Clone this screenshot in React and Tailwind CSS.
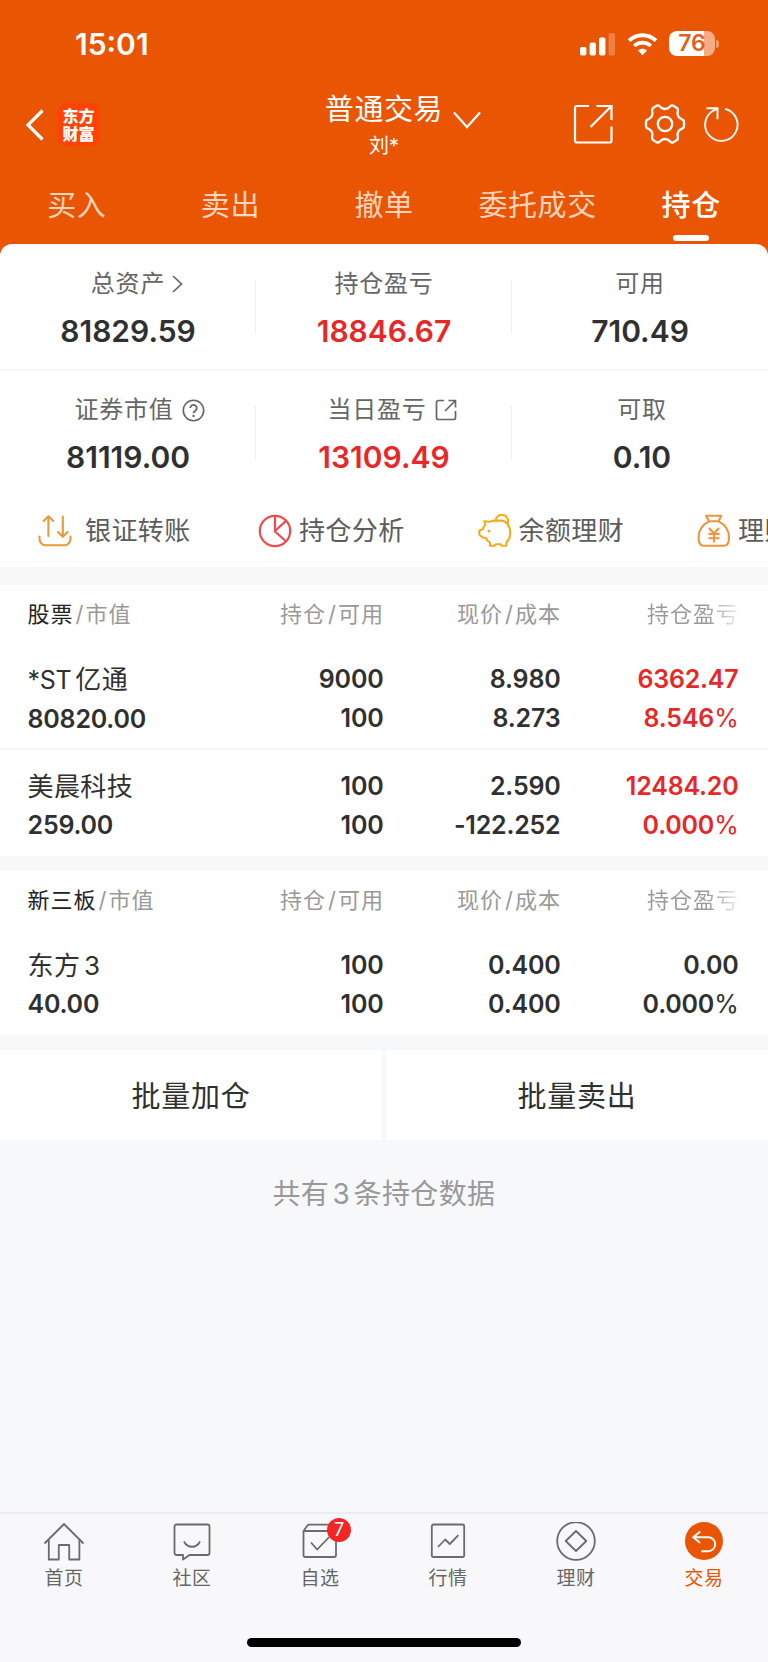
import React, { useState } from "react";
import clsx from "clsx";

const tabs = ["买入", "卖出", "撤单", "委托成交", "持仓"];

const stockRows = [
  {
    prefix: "*ST",
    name: "亿通",
    value: "80820.00",
    amount: "9000",
    usable: "100",
    price: "8.980",
    cost: "8.273",
    profit: "6362.47",
    rate: "8.546",
    up: true,
  },
  {
    name: "美晨科技",
    value: "259.00",
    amount: "100",
    usable: "100",
    price: "2.590",
    cost: "-122.252",
    profit: "12484.20",
    rate: "0.000",
    up: true,
  },
];

const neeqRows = [
  {
    name: "东方 3",
    value: "40.00",
    amount: "100",
    usable: "100",
    price: "0.400",
    cost: "0.400",
    profit: "0.00",
    rate: "0.000",
    up: false,
  },
];

/* ---------- icons ---------- */

function SignalIcon() {
  return (
    <svg width="36" height="24" viewBox="0 0 36 24" fill="#fff">
      <rect x="0" y="15" width="6.4" height="8.6" rx="1.8" />
      <rect x="9.6" y="10.6" width="6.4" height="13" rx="1.8" />
      <rect x="19" y="5.6" width="6.4" height="18" rx="1.8" />
      <rect x="28.6" y="1" width="6.4" height="22.6" rx="1.8" opacity="0.25" />
    </svg>
  );
}

function WifiIcon() {
  return (
    <svg width="31" height="24" viewBox="0 0 31 24" fill="none" stroke="#fff">
      <path d="M2 8.6C9.6 1.3 21.4 1.3 29 8.6" strokeWidth="4" />
      <path d="M7.2 14C11.8 9.6 19.2 9.6 23.8 14" strokeWidth="3.8" />
      <path
        d="M11 18.4c2.6-2.2 6.4-2.2 9 0l-4.5 4.8z"
        fill="#fff"
        stroke="none"
      />
    </svg>
  );
}

function Battery() {
  return (
    <div className="flex items-center gap-px">
      <div className="flex h-[25px] w-[46px] items-center justify-center rounded-[8px] bg-[linear-gradient(to_right,#fff_76%,#f6ab83_76%)] text-[23px] leading-none font-semibold text-[#e0601c]">
        76
      </div>
      <div className="h-2 w-[3px] rounded-r-full bg-[#f39a6b]" />
    </div>
  );
}

function BackIcon() {
  return (
    <svg width="18" height="32" viewBox="0 0 18 32" fill="none">
      <path d="M16.5 1.5L2 16l14.5 14.5" stroke="#fff" strokeWidth="3.2" />
    </svg>
  );
}

function ExportIcon() {
  return (
    <svg
      width="40"
      height="40"
      viewBox="0 0 40 40"
      fill="none"
      stroke="#fff"
      strokeWidth="2.2"
    >
      <path d="M16 2H4a2 2 0 0 0-2 2v32.5a2 2 0 0 0 2 2h32.5a2 2 0 0 0 2-2V22.5" />
      <path d="M23.5 2h15v14M38 2.5L17.5 23" />
    </svg>
  );
}

function GearIcon() {
  return (
    <svg
      width="42"
      height="42"
      viewBox="0 0 42 42"
      fill="none"
      stroke="#fff"
      strokeWidth="2.3"
      strokeLinejoin="round"
    >
      <path d="M13 2.6Q15 2 16.2 3.8Q18 6 21 6Q24 6 25.8 3.8Q27 2 29 2.6L32.6 4.7Q34.4 6 33.8 8.2Q33 11 34.3 13.4Q35.8 15.6 38 16.4Q40 17 40 19V23Q40 25 38 25.6Q35.8 26.4 34.3 28.6Q33 31 33.8 33.8Q34.4 36 32.6 37.3L29 39.4Q27 40 25.8 38.2Q24 36 21 36Q18 36 16.2 38.2Q15 40 13 39.4L9.4 37.3Q7.6 36 8.2 33.8Q9 31 7.7 28.6Q6.2 26.4 4 25.6Q2 25 2 23V19Q2 17 4 16.4Q6.2 15.6 7.7 13.4Q9 11 8.2 8.2Q7.6 6 9.4 4.7Z" />
      <circle cx="21" cy="21" r="7.2" />
    </svg>
  );
}

function RefreshIcon() {
  return (
    <svg
      width="37"
      height="37"
      viewBox="0 0 37 37"
      fill="none"
      stroke="#fff"
      strokeWidth="1.9"
    >
      <path d="M22 2.9A16.2 16.2 0 1 1 10 4.800L14 2.600" />
      <path d="M3.5 2.3h11v11" />
    </svg>
  );
}

function TransferIcon() {
  return (
    <svg
      width="34"
      height="34"
      viewBox="0 0 34 34"
      fill="none"
      stroke="#e99a3a"
      strokeWidth="2.1"
      strokeLinecap="round"
      strokeLinejoin="round"
    >
      <path d="M10.4 22V2.5M5.6 7l4.8-4.8L15.2 7" />
      <path d="M24.8 2.5V22M20 18l4.8 4.8 4.8-4.8" />
      <path d="M1.5 22.5v2.3a6.5 6.5 0 0 0 6.5 6.5h18a6.5 6.5 0 0 0 6.5-6.5v-2.3" />
    </svg>
  );
}

function PieIcon() {
  return (
    <svg
      width="34"
      height="34"
      viewBox="0 0 34 34"
      fill="none"
      stroke="#f04a4e"
      strokeWidth="2.2"
    >
      <circle cx="17" cy="17" r="15.2" />
      <path d="M17 2v15.5l11.5 10.2M17 17L28.2 6.6" />
    </svg>
  );
}

function PiggyIcon() {
  return (
    <svg
      width="34"
      height="34"
      viewBox="0 0 34 34"
      fill="none"
      stroke="#f2ab1c"
      strokeWidth="2.1"
      strokeLinejoin="round"
    >
      <path d="M6.3 7.2L11.8 7.8Q13.5 6.8 16 6.6H24Q32.2 9 32.2 19Q32.2 25 28.5 28.2V31.8H23.8L22.8 30.2H17.6L16.6 31.8H12V28.6Q9 26.8 7.6 23.8H5L1.4 20.8V16.4L4.8 15.2Q5.4 12.6 7.4 10.8Z" />
      <path d="M17.6 6.4a6.2 6.2 0 1 1 11.6 3.6" />
      <circle cx="11" cy="17" r="1.5" fill="#f2ab1c" stroke="none" />
    </svg>
  );
}

function MoneyBagIcon() {
  return (
    <svg
      width="34"
      height="34"
      viewBox="0 0 34 34"
      fill="none"
      stroke="#f0953a"
      strokeWidth="2.1"
      strokeLinejoin="round"
    >
      <path d="M9 1.800h15.400l-3 5.400H12z" />
      <path d="M12 7.400C5.600 10.600 1.600 16.600 1.600 23.400c0 5.600 1.600 8.400 5.400 8.400h19.600c3.800 0 5.400-2.800 5.400-8.400 0-6.800-4-12.800-10.400-16" />
      <path d="M12 14l5 5.800 5-5.800M17 19.800v8.600M11.400 20h11.200M11.400 24.200h11.200" />
    </svg>
  );
}

function HelpIcon() {
  return (
    <svg width="23" height="23" viewBox="0 0 23 23" fill="none" stroke="#666">
      <circle cx="11.5" cy="11.5" r="10.2" strokeWidth="1.6" />
      <path
        d="M8.3 9a3.2 3.2 0 1 1 5 2.7c-1.200.8-1.800 1.400-1.800 2.600"
        strokeWidth="1.8"
      />
      <circle cx="11.5" cy="17" r="1.2" fill="#666" stroke="none" />
    </svg>
  );
}

function ShareIcon() {
  return (
    <svg
      width="22"
      height="22"
      viewBox="0 0 22 22"
      fill="none"
      stroke="#666"
      strokeWidth="1.7"
    >
      <path d="M9 1.500H3.500a2 2 0 0 0-2 2v15a2 2 0 0 0 2 2h15a2 2 0 0 0 2-2V12" />
      <path d="M13.500 1.500h7v7M20 2L10 12" />
    </svg>
  );
}

function HomeIcon() {
  return (
    <svg
      width="42"
      height="40"
      viewBox="0 0 42 40"
      fill="none"
      stroke="#6b6b6b"
      strokeWidth="1.8"
      strokeLinejoin="round"
    >
      <path d="M1.500 21.500L21 2l19.500 19.500" />
      <path d="M5.800 18v19.500h10V23h10.400v14.500h10.200V18" />
    </svg>
  );
}

function CommunityIcon() {
  return (
    <svg
      width="42"
      height="40"
      viewBox="0 0 42 40"
      fill="none"
      stroke="#6b6b6b"
      strokeWidth="1.8"
      strokeLinejoin="round"
    >
      <path d="M5.500 2.500h31a2 2 0 0 1 2 2V31a2 2 0 0 1-2 2H18.500L12 37.500V33H5.500a2 2 0 0 1-2-2V4.500a2 2 0 0 1 2-2z" />
      <path d="M13 19.500c3.500 7 12.500 7 16 0" />
    </svg>
  );
}

function WatchIcon() {
  return (
    <svg
      width="42"
      height="40"
      viewBox="0 0 42 40"
      fill="none"
      stroke="#6b6b6b"
      strokeWidth="1.8"
      strokeLinejoin="round"
    >
      <path d="M4.500 9v24a2 2 0 0 0 2 2H35a2 2 0 0 0 2-2V9M4.500 9l4-5.600a2 2 0 0 1 1.500-.8h22L37 9zM4.500 9H37" />
      <path d="M12 20.500l6.200 7 12-12.500" />
    </svg>
  );
}

function MarketIcon() {
  return (
    <svg
      width="42"
      height="40"
      viewBox="0 0 42 40"
      fill="none"
      stroke="#6b6b6b"
      strokeWidth="1.8"
      strokeLinejoin="round"
    >
      <rect x="4.8" y="2.5" width="32.4" height="32.5" rx="1.8" />
      <path d="M11 25l7.200-7.500 4.600 4.500 8.600-8.800" />
    </svg>
  );
}

function WealthIcon() {
  return (
    <svg
      width="42"
      height="40"
      viewBox="0 0 42 40"
      fill="none"
      stroke="#6b6b6b"
      strokeWidth="1.8"
      strokeLinejoin="round"
    >
      <circle cx="21" cy="19" r="18.8" />
      <path d="M21 9l10.300 10L21 29 10.700 19z" />
    </svg>
  );
}

function TradeIcon() {
  return (
    <svg width="42" height="40" viewBox="0 0 42 40" fill="none">
      <circle cx="21" cy="19" r="19" fill="#ea5504" />
      <path
        d="M17.200 9.500l-7 5.800 7 5.800M10.500 15.200h14.700a7 7 0 0 1 0 14h-7"
        stroke="#fff"
        strokeWidth="1.9"
      />
    </svg>
  );
}

/* ---------- page parts ---------- */

function Header() {
  const [activeTab, setActiveTab] = useState("持仓");

  return (
    <header className="h-[256px] bg-[#ea5504] text-white">
      <div className="flex h-[87px] items-center justify-between pr-[49px] pl-[75px]">
        <span className="text-[30px] leading-none font-semibold">15:01</span>
        <div className="flex items-center gap-[11px]">
          <SignalIcon />
          <WifiIcon />
          <Battery />
        </div>
      </div>

      <div className="grid h-[81px] grid-cols-[1fr_auto_1fr] items-start">
        <div className="flex items-center gap-[13px] pt-[16px] pl-[26px]">
          <BackIcon />
          <div className="flex h-[43px] w-[43px] flex-col items-center justify-center rounded-[9px] bg-[#ff4206] text-[16px] leading-[18px] font-black">
            <span>东方</span>
            <span>财富</span>
          </div>
        </div>
        <div className="relative flex flex-col items-center pt-[4px]">
          <span className="text-[29px] leading-[38px] tracking-[0.6px]">
            普通交易
          </span>
          <span className="text-[20px] leading-[34px]">刘*</span>
          <svg
            width="28"
            height="18"
            viewBox="0 0 28 18"
            fill="none"
            className="absolute top-[24px] left-[128px]"
          >
            <path d="M1 1.500l13 14.500 13-14.500" stroke="#fff" strokeWidth="2.2" />
          </svg>
        </div>
        <div className="flex items-center justify-end pt-[16px] pr-[28px]">
          <ExportIcon />
          <span className="w-[31px]" />
          <GearIcon />
          <span className="w-[17px]" />
          <RefreshIcon />
        </div>
      </div>

      <nav className="grid h-[76px] grid-cols-5">
        {tabs.map((tab) => (
          <button
            key={tab}
            type="button"
            onClick={() => setActiveTab(tab)}
            className="flex flex-col items-center pt-[19px]"
          >
            <span
              className={clsx(
                "text-[29px] leading-[38px] tracking-[0.6px]",
                tab === activeTab ? "font-medium text-white" : "text-[#ffd5bd]"
              )}
            >
              {tab}
            </span>
            {tab === activeTab && (
              <span className="mt-[10px] h-[6px] w-[36px] rounded-full bg-white" />
            )}
          </button>
        ))}
      </nav>
    </header>
  );
}

function Stat({ label, value, icon, up, divider, className }) {
  return (
    <div className="relative flex flex-col items-center">
      <div
        className={clsx(
          "flex h-[36px] items-center text-[24px] leading-[36px] tracking-[0.8px] text-[#666]",
          className
        )}
      >
        {label}
        {icon}
      </div>
      <div
        className={clsx(
          "mt-[11px] text-[30px] leading-[36px] font-semibold",
          up ? "text-[#e62828]" : "text-[#303030]"
        )}
      >
        {value}
      </div>
      {divider && (
        <span className="absolute top-[14px] right-0 h-[54px] w-px bg-[#f0f0f2]" />
      )}
    </div>
  );
}

function Summary() {
  return (
    <section className="relative -mt-3 rounded-t-[12px] bg-white">
      <div className="grid h-[127px] grid-cols-3 border-b-2 border-[#f7f7f8] pt-[22px]">
        <Stat
          label="总资产"
          value="81829.59"
          divider
          className="pl-[18px]"
          icon={
            <svg
              width="11"
              height="18"
              viewBox="0 0 11 18"
              fill="none"
              className="ml-[7px]"
            >
              <path d="M1 1l8.500 8L1 17" stroke="#666" strokeWidth="1.7" />
            </svg>
          }
        />
        <Stat label="持仓盈亏" value="18846.67" up divider />
        <Stat label="可用" value="710.49" />
      </div>
      <div className="grid h-[123px] grid-cols-3 pt-[21px]">
        <Stat
          label="证券市值"
          value="81119.00"
          divider
          className="pl-[23px]"
          icon={
            <span className="ml-[8px]">
              <HelpIcon />
            </span>
          }
        />
        <Stat
          label="当日盈亏"
          value="13109.49"
          up
          divider
          className="pl-[16px]"
          icon={
            <span className="ml-[8px]">
              <ShareIcon />
            </span>
          }
        />
        <div className="pl-[4px]">
          <Stat label="可取" value="0.10" />
        </div>
      </div>

      <div className="flex h-[73px] items-center overflow-hidden text-[26px] leading-[40px] tracking-[0.4px] whitespace-nowrap text-[#5c5c5c]">
        <div className="flex w-[258px] shrink-0 items-center gap-[13px] pl-[38px]">
          <TransferIcon />
          银证转账
        </div>
        <div className="flex w-[219.500px] shrink-0 items-center gap-[7px]">
          <PieIcon />
          持仓分析
        </div>
        <div className="flex w-[219.500px] shrink-0 items-center gap-[7px]">
          <PiggyIcon />
          余额理财
        </div>
        <div className="flex w-[219px] shrink-0 items-center gap-[7px]">
          <MoneyBagIcon />
          理财
        </div>
      </div>
    </section>
  );
}

function HoldingRow({ row }) {
  return (
    <div className="grid h-[107px] grid-cols-[177px_1fr_177px_178px] border-b-2 border-[#f7f7f8] pt-[17px] pr-[29.500px] pl-[27.500px] text-[25px] leading-[39px] font-semibold tracking-[-0.2px] text-[#303030] last:h-[106px] last:border-b-0">
      <div className="whitespace-nowrap">
        <div className="text-[26px] font-normal tracking-[0.4px] [word-spacing:-4px]">
          {row.prefix && (
            <span className="mr-[4px] text-[25px] tracking-[-0.3px]">
              {row.prefix}
            </span>
          )}
          {row.name}
        </div>
        <div>{row.value}</div>
      </div>
      <div className="text-right">
        <div>{row.amount}</div>
        <div>{row.usable}</div>
      </div>
      <div className="text-right">
        <div>{row.price}</div>
        <div>{row.cost}</div>
      </div>
      <div className={clsx("text-right", row.up && "text-[#e62828]")}>
        <div>{row.profit}</div>
        <div>
          {row.rate}
          <span className="font-normal">%</span>
        </div>
      </div>
    </div>
  );
}

function Slash() {
  return <span className="mr-[1px] ml-[2px]">/</span>;
}

function HoldingTable({ title, rows }) {
  return (
    <section className="bg-white">
      <div className="grid h-[58px] grid-cols-[177px_1fr_177px_178px] items-center pr-[29px] pl-[27.500px] text-[22px] leading-[34px] tracking-[1px] text-[#999]">
        <div>
          <span className="text-[#222]">{title}</span>
          <Slash />
          市值
        </div>
        <div className="text-right">
          持仓
          <Slash />
          可用
        </div>
        <div className="text-right">
          现价
          <Slash />
          成本
        </div>
        <div className="bg-[linear-gradient(to_right,#999_82%,#eee_100%)] bg-clip-text text-right text-transparent">
          持仓盈亏
        </div>
      </div>
      <div>
        {rows.map((row) => (
          <HoldingRow key={row.name} row={row} />
        ))}
      </div>
    </section>
  );
}

const navItems = [
  { label: "首页", Icon: HomeIcon },
  { label: "社区", Icon: CommunityIcon },
  { label: "自选", Icon: WatchIcon, badge: 7 },
  { label: "行情", Icon: MarketIcon },
  { label: "理财", Icon: WealthIcon },
  { label: "交易", Icon: TradeIcon, active: true },
];

function BottomNav() {
  return (
    <footer className="flex h-[150px] flex-col items-center border-t-2 border-[#ebecee] bg-[#f8f8fa]">
      <nav className="grid w-full grid-cols-6 pt-[8px]">
        {navItems.map(({ label, Icon, badge, active }) => (
          <div key={label} className="relative flex flex-col items-center">
            <Icon />
            <span
              className={clsx(
                "mt-[3px] text-[19px] leading-[28px] tracking-[0.5px]",
                active ? "text-[#ea5504]" : "text-[#666]"
              )}
            >
              {label}
            </span>
            {badge && (
              <span className="absolute -top-[4px] left-[71px] flex h-[24px] w-[24px] items-center justify-center rounded-full bg-[#f42525] text-[18px] leading-none text-white">
                {badge}
              </span>
            )}
          </div>
        ))}
      </nav>
      <div className="mt-[45px] h-[9px] w-[274px] rounded-full bg-black" />
    </footer>
  );
}

function App() {
  return (
    <div className="flex h-[1662px] w-[768px] flex-col overflow-hidden bg-[#f7f8fa] font-[Inter,'Noto_Sans_CJK_SC',sans-serif]">
      <Header />
      <Summary />
      <main className="mt-[18px] flex flex-1 flex-col">
        <HoldingTable title="股票" rows={stockRows} />
        <div className="h-[15px]" />
        <HoldingTable title="新三板" rows={neeqRows} />
        <div className="mt-[15px] grid h-[90px] grid-cols-2 gap-1 text-[29px] tracking-[0.8px] text-[#303030]">
          <button type="button" className="bg-white pt-[4px]">
            批量加仓
          </button>
          <button type="button" className="bg-white pt-[4px]">
            批量卖出
          </button>
        </div>
        <p className="mt-[34px] text-center text-[28px] leading-[40px] tracking-[0.4px] text-[#999] [word-spacing:-5px]">
          共有 3 条持仓数据
        </p>
      </main>
      <BottomNav />
    </div>
  );
}

export default App;
